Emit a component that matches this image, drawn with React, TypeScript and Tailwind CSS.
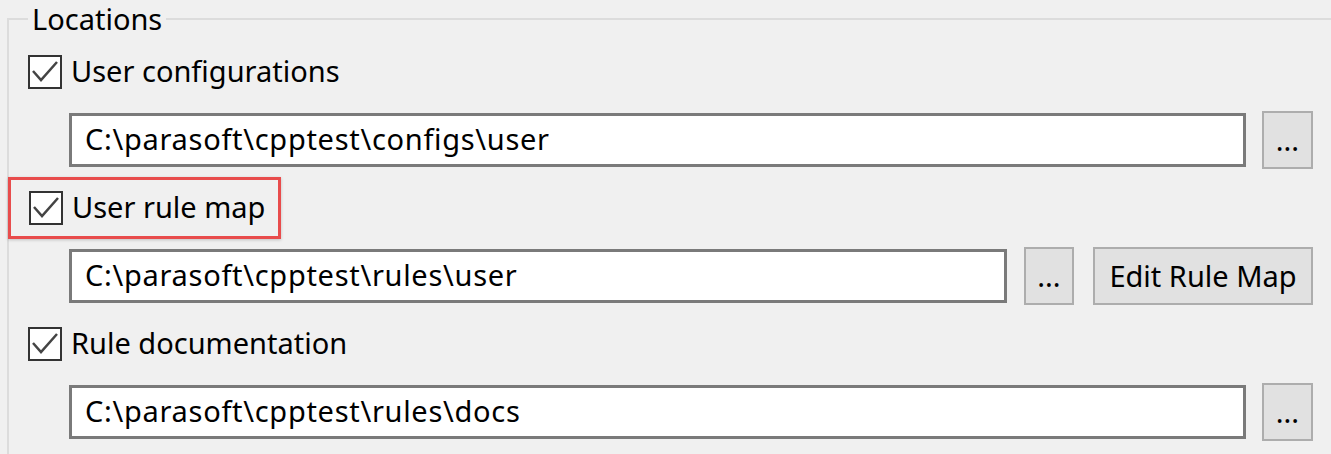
import React from "react";

const font = { fontFamily: '"Noto Sans", "Open Sans", sans-serif' };

function CheckBox() {
    return (
        <div className="w-[34px] h-[34px] border-2 border-[#333333] bg-white flex items-center justify-center shrink-0">
            <svg width="30" height="30" viewBox="0 0 30 30">
                <path d="M3 14 L11 23 L27 5" fill="none" stroke="#444444" strokeWidth="2.5" />
            </svg>
        </div>
    );
}

function CheckRow({ label }: { label: string }) {
    return (
        <div className="flex items-center gap-[9px]">
            <CheckBox />
            <span className="text-[29px] text-[#000000] leading-none pb-[3px]">{label}</span>
        </div>
    );
}

function PathField({ value, width }: { value: string; width: string }) {
    return (
        <div className={`${width} h-[54px] border-[3px] border-[#7a7a7a] bg-white flex items-center pl-[13px] shrink-0`}>
            <span className="text-[29px] tracking-[0.7px] text-black leading-none pb-[3px]">{value}</span>
        </div>
    );
}

function WinButton({ label, width }: { label: string; width: string }) {
    return (
        <div className={`${width} h-[58px] border-2 border-[#adadad] bg-[#e1e1e1] flex items-center justify-center shrink-0`}>
            <span className="text-[29px] text-black leading-none pb-[2px]">{label}</span>
        </div>
    );
}

export default function App() {
    return (
        <div className="w-[1331px] h-[454px] bg-[#f0f0f0] overflow-hidden" style={font}>
            <div className="flex h-[36px]">
                <div className="ml-[7px] w-[21px] h-[18px] self-end border-l-2 border-t-2 border-[#dcdcdc]" />
                <span className="px-[4px] text-[29px] leading-[38px] text-black">Locations</span>
                <div className="flex-1 h-[18px] self-end border-t-2 border-[#dcdcdc]" />
            </div>
            <div className="ml-[7px] border-l-2 border-[#dcdcdc] h-[418px] pl-[19px] pt-[2px]">
                <div className="h-[68px] flex items-center">
                    <CheckRow label="User configurations" />
                </div>
                <div className="h-[68px] flex items-center pl-[41px] gap-[16px]">
                    <PathField value="C:\parasoft\cpptest\configs\user" width="w-[1177px]" />
                    <WinButton label="..." width="w-[51px]" />
                </div>
                <div className="h-[68px] flex items-center">
                    <div className="-ml-[20px] h-[62px] w-[273px] border-[3px] border-[#e84c4c] flex items-center pl-[18px] shadow-[0_1px_3px_rgba(0,0,0,0.2)]">
                        <CheckRow label="User rule map" />
                    </div>
                </div>
                <div className="h-[68px] flex items-center pl-[41px]">
                    <PathField value="C:\parasoft\cpptest\rules\user" width="w-[938px]" />
                    <div className="ml-[17px]">
                        <WinButton label="..." width="w-[50px]" />
                    </div>
                    <div className="ml-[19px]">
                        <WinButton label="Edit Rule Map" width="w-[220px]" />
                    </div>
                </div>
                <div className="h-[68px] flex items-center">
                    <CheckRow label="Rule documentation" />
                </div>
                <div className="h-[68px] flex items-center pl-[41px] gap-[16px]">
                    <PathField value="C:\parasoft\cpptest\rules\docs" width="w-[1177px]" />
                    <WinButton label="..." width="w-[51px]" />
                </div>
            </div>
        </div>
    );
}
